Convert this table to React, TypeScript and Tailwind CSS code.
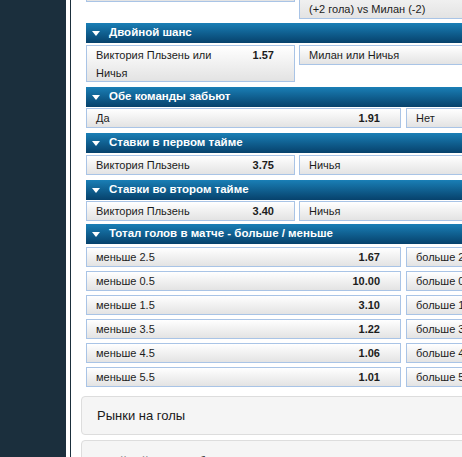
import React from "react";

type Pick = { label: string; odds?: string };

const doubleChance: Pick[] = [
  { label: "Виктория Пльзень или Ничья", odds: "1.57" },
  { label: "Милан или Ничья" },
  { label: "Виктория Пльзень или Милан" },
];

const totals = [
  { under: "меньше 2.5", uOdds: "1.67", over: "больше 2.5" },
  { under: "меньше 0.5", uOdds: "10.00", over: "больше 0.5" },
  { under: "меньше 1.5", uOdds: "3.10", over: "больше 1.5" },
  { under: "меньше 3.5", uOdds: "1.22", over: "больше 3.5" },
  { under: "меньше 4.5", uOdds: "1.06", over: "больше 4.5" },
  { under: "меньше 5.5", uOdds: "1.01", over: "больше 5.5" },
];

function MarketHeader({ title }: { title: string }) {
  return (
    <div className="flex h-[20px] items-center bg-gradient-to-b from-[#1a7fb6] to-[#07426c] pl-[6px] text-[11.5px] font-bold text-white">
      <span className="mr-[9px] h-0 w-0 border-x-[4px] border-t-[5px] border-x-transparent border-t-white" />
      {title}
    </div>
  );
}

function Cell({
  label,
  odds,
  width,
  tall,
}: {
  label: string;
  odds?: string;
  width: string;
  tall?: boolean;
}) {
  return (
    <div
      className={`flex shrink-0 justify-between border border-[#a9c4e6] bg-gradient-to-b from-white to-[#e3e3e3] pl-[9px] pr-[20px] text-[11px] leading-[18px] text-[#1c1c1c] ${width} ${
        tall ? "h-[37px] items-start" : "h-[20px] items-center"
      }`}
    >
      <span className={tall ? "w-[125px]" : "whitespace-nowrap"}>{label}</span>
      {odds && <span className="font-bold">{odds}</span>}
    </div>
  );
}

export default function App() {
  return (
    <div
      className="flex h-[457px] w-[462px] overflow-hidden bg-white"
      style={{ fontFamily: '"Liberation Sans", Arial, sans-serif' }}
    >
      {/* Sidebar */}
      <div className="w-[66px] shrink-0 bg-[#1b2f3d]" />
      <div className="w-[4px] shrink-0 bg-white" />
      <div className="w-[1px] shrink-0 bg-[#1b2f3d]" />

      {/* Content */}
      <div className="w-[660px] shrink-0 pl-[10px]">
        <div className="ml-[5px]">
          {/* tail of previous market */}
          <div className="flex items-start gap-[4px]">
            <div className="h-[2px] w-[209px] shrink-0 border-x border-b border-[#a9c4e6] bg-[#e4e4e4]" />
            <div className="flex h-[19px] w-[209px] shrink-0 items-center border-x border-b border-[#a9c4e6] bg-gradient-to-b from-[#f0f0f0] to-[#e3e3e3] pl-[9px] text-[11px] text-[#1c1c1c]">
              (+2 гола) vs Милан (-2)
            </div>
          </div>

          {/* Двойной шанс */}
          <div className="mt-[4px]">
            <MarketHeader title="Двойной шанс" />
            <div className="mt-[2px] flex items-start gap-[4px]">
              <Cell label={doubleChance[0].label} odds={doubleChance[0].odds} width="w-[209px]" tall />
              <Cell label={doubleChance[1].label} width="w-[209px]" />
              <Cell label={doubleChance[2].label} width="w-[209px]" />
            </div>
          </div>

          {/* Обе команды забьют */}
          <div className="mt-[5px]">
            <MarketHeader title="Обе команды забьют" />
            <div className="mt-[1px] flex gap-[5px]">
              <Cell label="Да" odds="1.91" width="w-[315px]" />
              <Cell label="Нет" odds="1.80" width="w-[315px]" />
            </div>
          </div>

          {/* Ставки в первом тайме */}
          <div className="mt-[5px]">
            <MarketHeader title="Ставки в первом тайме" />
            <div className="mt-[2px] flex gap-[4px]">
              <Cell label="Виктория Пльзень" odds="3.75" width="w-[209px]" />
              <Cell label="Ничья" odds="2.10" width="w-[209px]" />
              <Cell label="Милан" odds="2.75" width="w-[209px]" />
            </div>
          </div>

          {/* Ставки во втором тайме */}
          <div className="mt-[5px]">
            <MarketHeader title="Ставки во втором тайме" />
            <div className="mt-[1px] flex gap-[4px]">
              <Cell label="Виктория Пльзень" odds="3.40" width="w-[209px]" />
              <Cell label="Ничья" odds="2.40" width="w-[209px]" />
              <Cell label="Милан" odds="2.30" width="w-[209px]" />
            </div>
          </div>

          {/* Тотал голов */}
          <div className="mt-[3px]">
            <MarketHeader title="Тотал голов в матче - больше / меньше" />
            <div className="mt-[3px] flex flex-col gap-[4px]">
              {totals.map((row) => (
                <div key={row.under} className="flex gap-[5px]">
                  <Cell label={row.under} odds={row.uOdds} width="w-[315px]" />
                  <Cell label={row.over} width="w-[315px]" />
                </div>
              ))}
            </div>
          </div>
        </div>

        {/* Collapsed markets */}
        <div className="mt-[9px] flex flex-col gap-[5px]">
          <div className="flex h-[39px] items-center rounded-[4px] border border-[#dddddd] bg-[#f5f5f5] pl-[15px] text-[13px] text-[#1a1a1a]">
            Рынки на голы
          </div>
          <div className="h-[39px] rounded-[4px] border border-[#dddddd] bg-[#f5f5f5] pl-[15px] pt-[13px] text-[13px] leading-[15px] text-[#1a1a1a]">
            Двойной шанс и больше меньше
          </div>
        </div>
      </div>
    </div>
  );
}
